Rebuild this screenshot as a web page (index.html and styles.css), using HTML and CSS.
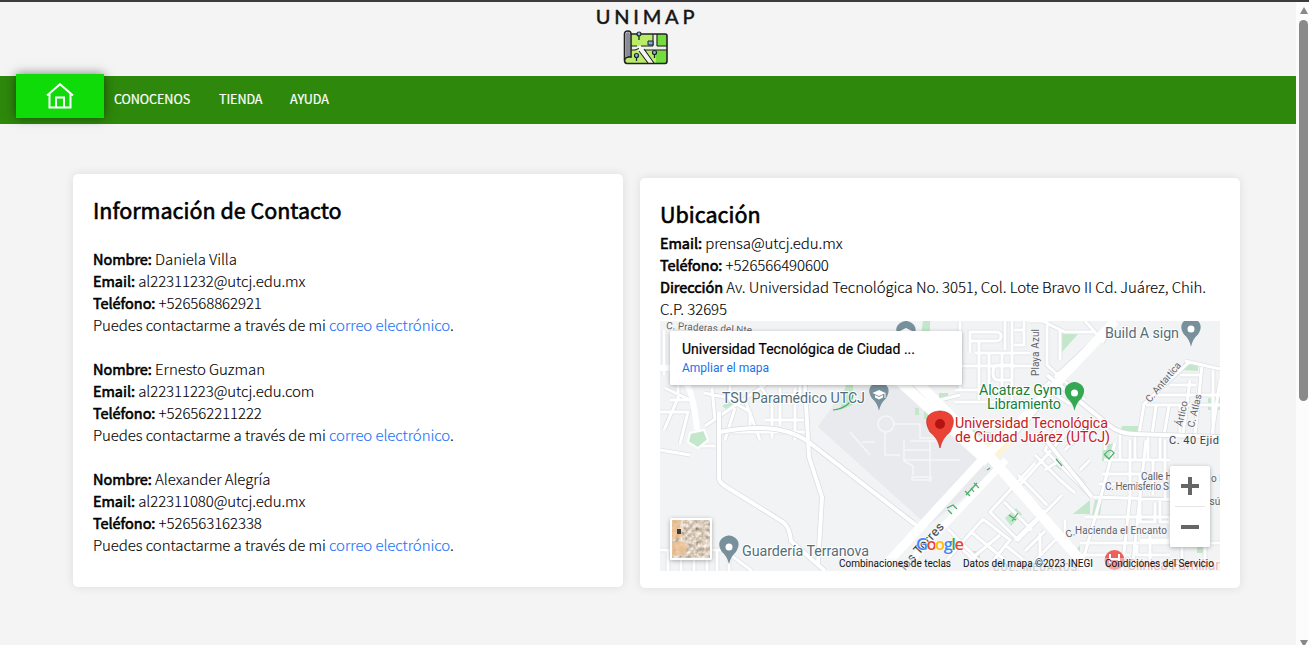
FILE: index.html
```html
<!DOCTYPE html>
<html lang="es">
<head>
<meta charset="utf-8">
<title>UNIMAP</title>
<link rel="stylesheet" href="styles.css">
</head>
<body>
<div class="window">
<div class="page">
  <header class="header">
    <div class="brand">UNIMAP</div>
    <svg class="logo" width="46" height="36" viewBox="0 0 46 36">
      <path d="M8 4H42.500Q44 4 44 6V31Q44 33.500 42 33.500H4Q1.500 33 1.500 29L8 27Z" fill="#b9ec67"/>
      <path d="M33 4H43Q44 4 44 6V31Q44 33 42 33.500H33Z" fill="#75dc3d"/>
      <path d="M8 18H44M32 4V18" stroke="#eee" stroke-width="3.500"/>
      <path d="M15 17L29 33" stroke="#f4f4f4" stroke-width="5"/>
      <path d="M8 16H14M8 20H12L16 18.500M18 16H30M34 16H44M30 4V16M34 4V16M21 20H44M16 21L25 33M21 19L31 33" stroke="#222" fill="none" stroke-width="1.100"/>
      <path d="M8 4H42.500Q44 4 44 6V31Q44 33.500 42 33.500H4Q1.500 33.500 1.500 30V4Q1.500 1 5 1Q8 1 8 4V27Q2 26 1.500 31" fill="none" stroke="#222" stroke-width="1.600"/>
      <path d="M2.400 4Q5 0 7 4V26H5Q3 26 2.400 28Z" fill="#8a8b98"/>
      <path d="M25 11H30V15H25Z" fill="#78a9e8" stroke="#222"/>
      <path d="M16 5V10M13.500 27V31M31.500 24V28" stroke="#222" stroke-width="1.300"/>
      <g fill="#86b6ef" stroke="#222" stroke-width="1.200"><circle cx="16" cy="4" r="2"/><circle cx="13.500" cy="25.500" r="2"/><circle cx="31.500" cy="22.500" r="2"/></g>
    </svg>
  </header>
  <nav class="nav">
    <a class="home"><svg width="28" height="26" viewBox="0 0 28 26" fill="none" stroke="#fff" stroke-width="2"><path d="M1 12.500L14 1.200L27 12.500M3.500 10.500V24.500H24.500V10.500M10 24V14.500H18V24"/></svg></a>
    <a class="n1">CONOCENOS</a><a class="n2">TIENDA</a><a class="n3">AYUDA</a>
  </nav>
  <main class="main">
    <section class="card contact">
      <h2>Información de Contacto</h2>
      <div class="person"><p><b>Nombre:</b> Daniela Villa</p><p><b>Email:</b> al22311232@utcj.edu.mx</p><p><b>Teléfono:</b> +526568862921</p><p>Puedes contactarme a través de mi <a>correo electrónico</a>.</p></div>
      <div class="person"><p><b>Nombre:</b> Ernesto Guzman</p><p><b>Email:</b> al22311223@utcj.edu.com</p><p><b>Teléfono:</b> +526562211222</p><p>Puedes contactarme a través de mi <a>correo electrónico</a>.</p></div>
      <div class="person"><p><b>Nombre:</b> Alexander Alegría</p><p><b>Email:</b> al22311080@utcj.edu.mx</p><p><b>Teléfono:</b> +526563162338</p><p>Puedes contactarme a través de mi <a>correo electrónico</a>.</p></div>
    </section>
    <section class="card place">
      <h2>Ubicación</h2>
      <p><b>Email:</b> prensa@utcj.edu.mx</p><p><b>Teléfono:</b> +526566490600</p><p><b>Dirección</b> Av. Universidad Tecnológica No. 3051, Col. Lote Bravo II Cd. Juárez, Chih.</p><p>C.P. 32695</p>
      <svg class="map" width="560" height="250" viewBox="660 321 560 250">
        <defs>
          <path id="minor" d="M660 369H700M678 382V398L664 430M664 330V375M670 400H690M660 412H688L680 444M690 400L665 388M705 426L772 380M704 393L740 400M712 388L715 420M730 385V400L750 412V425M760 385L772 405V438M745 400L760 440M718 432H805M700 446H715M735 408L725 440M780 388V425M795 388V440M765 420H805M660 450L690 455M800 385V395H780M660 550H724L752 571M668 551V571M681 551V571M694 551V571M707 551V571M717 551V571M729 560V571M970 341H996Q1001 341 1001 336Q1001 332 996 332H970V353M960 321V390M975 353H1030M979 342V400M989 353V400M1002 353V400M1012 321V400M1024 321V330H1014M1024 330V345H1014M1014 365H998Q993 365 993 373Q993 380 998 380H1012M955 366H1034M955 390H1005M955 402H1030M946 353V385M1005 321V350M940 400L960 395M1030 321H1042L1065 332H1095L1103 343M1047 321V365L1085 400M1060 330V360M1095 340L1045 386M1085 321L1103 341M1042 386L1070 404M1185 361L1220 369M1188 363L1144 404L1139 435M1180 375H1200M1170 385H1196M1158 395H1220M1146 405H1220M1156 406L1152 435M1169 406L1164 435M1180 406V435M1190 380L1183 435M1202 365L1195 435M1213 370V435M1220 380L1212 435M1105 435V450M1120 435V460M1135 435V460M1148 435V460M1160 435V460M1115 443L1100 500L1080 571M1130 440V497L1122 571M1146 440L1132 571M1104 460H1170M1102 474H1172M1099 484H1172M1092 497L1220 501M1085 517H1170V540H1140M1080 543H1220M1140 475V500M1153 460V495M1165 440V500M1140 498V522H1155V503M1160 500V522H1175M1075 555H1130M1137 545V555H1170M1150 530V571M1182 540V571M1205 545V571M1065 435L1018 487M1055 430L1045 450L1092 497M1065 450L1085 430M1080 470L1090 460M1060 480L1075 493M1075 475L1085 485M1035 455L1062 482M1018 475L1047 505M1035 463L990 512L1018 540L1062 495M1004 502L1032 530M1020 490L1045 514M983 519L944 563M983 519L1010 540L985 571M970 531L1005 560M958 545L985 571M948 529L984 566M1000 535L970 560M1005 545L1030 565M1015 540L1045 510M1025 551L1045 531M1035 561L1055 540M1045 470L1060 460M1040 533V555M1065 520V540H1055"/>
          <path id="roads" d="M719 412V478Q719 482 725 486L783 522Q790 528 791 541L825 571M805 385L809 457L822 497L818 565M720 432Q780 420 810 443L912 522Q917 525 921 530M1102 342L1115 321M1010 439L1115 321M1047 375L1110 426Q1120 434 1135 434L1220 437M1042 435L1092 497"/>
          <path id="pin" d="M0 17Q-2 8-8 3C-17-11-4-16 0-16S17-11 8 3Q2 8 0 17Z"/>
          <filter id="terrain" x="0" y="0" width="1" height="1"><feTurbulence type="fractalNoise" baseFrequency=".25" numOctaves="3" seed="5" result="n"/><feColorMatrix in="n" values=".9 .5 0 0 0  .9 .4 0 0 -.04  .9 .3 0 0 -.09  0 0 0 0 1"/></filter>
          <filter id="drop" x="-20%" y="-20%" width="140%" height="150%"><feDropShadow dx="0" dy="1" stdDeviation="2" flood-opacity=".3"/></filter>
        </defs>
        <path d="M660 321H1220V571H660Z" fill="#f1f3f4"/>
        <path d="M846 387H915L978 455L1000 468L928 526L818 427Z" fill="#e8eaed"/>
        <path d="M984 445L1005 425L1018 438L990 465Z" fill="#fef3d5"/>
        <g fill="#c3e7ca"><path d="M722 406L735 398L729 411ZM752 391L766 383L755 397ZM1062 334H1078L1062 352ZM1180 370L1185 361L1198 365V371ZM1208 398H1220V410H1208ZM1122 426H1141V433H1120ZM1103 445L1116 443L1113 461H1102ZM1090 500V514H1073ZM1095 500H1102L1100 515H1092ZM1071 556L1080 545V560ZM923 321H930V335H921ZM939 393H948V401H939ZM915 408H919V415H915ZM924 407H930V419H924ZM846 385H853V405L840 410ZM970 430L990 432L996 440L980 436ZM1005 518L1016 508L1022 514L1011 526ZM1142 519L1150 520V523H1142ZM1165 520H1173V523H1165ZM1197 547H1207V553H1197ZM973 551H980V558H973ZM1055 460L1066 467L1061 470L1053 464Z"/></g>
        <g fill="none" stroke="#f5f6f8" stroke-width="1.600"><circle cx="886" cy="424" r="8"/><path d="M893 424H920V438H940M904 440V461L913 466V475M904 460H960M912 477H931V480H912ZM930 440V482M885 433V455H900M910 441H938M905 450H930M850 432L870 455M862 442H875"/></g>
        <use href="#minor" fill="none" stroke="#dfe1e5" stroke-width="4.600"/><use href="#minor" fill="none" stroke="#fff" stroke-width="3"/>
        <use href="#roads" fill="none" stroke="#dadce2" stroke-width="5.500"/><use href="#roads" fill="none" stroke="#fff" stroke-width="4"/>
        <path d="M685 382Q693 390 697 430M660 368H672" stroke="#fff" stroke-width="6" fill="none"/>
        <path d="M888 371L988 462M915 380L984 450L1090 571" stroke="#fff" stroke-width="10" fill="none"/>
        <path d="M1115 321L1030 412L984 458L880 571" stroke="#fff" stroke-width="9" fill="none"/><path d="M1006 460L901 571" stroke="#fff" stroke-width="7"/>
        <path d="M833 410Q850 408 853 395M947 508L953 505L957 509M952 514L948 510M966 495L977 483M965 491L970 496M974 483L979 488M971 488L974 492M987 470L990 468M1056 459L1062 466M1105 454Q1110 447 1114 453L1109 459L1104 454M1009 515L1016 520M1012 521L1018 513" stroke="#4cad6c" stroke-width="1.200" fill="none"/>
        <path d="M690 433L704 430L708 440L698 448L688 442Z" fill="#c3e7ca" stroke="#fff" stroke-width="2"/>
        <g class="street">
          <text x="666" y="329" textLength="86" transform="rotate(3 666 329)">C. Praderas del Nte</text>
          <text transform="translate(1039 376) rotate(-90)" textLength="47">Playa Azul</text>
          <text transform="translate(1150 403) rotate(-50)" textLength="49">C. Antartica</text>
          <text transform="translate(1182 427) rotate(-77)" textLength="26">Ártico</text>
          <text transform="translate(1194 428) rotate(-77)" textLength="34">C. Atlas</text>
          <text x="1169" y="444" textLength="50" class="strong">C. 40 Ejid</text>
          <text x="1141" y="480">Calle H</text><text x="1105" y="490" textLength="64">C. Hemisferio S</text>
          <text x="1211" y="482">o N</text><text x="1209.500" y="505">sú</text>
          <text x="1075" y="534" textLength="92">Hacienda el Encanto</text><text transform="translate(1067 538) rotate(-20)">C.</text>
          <text transform="translate(905 571) rotate(-48)" textLength="59" class="avenue">las Torres</text>
          <text x="993" y="571" fill="#aaa" textLength="84">COL. MEDANOS</text>
        </g>
        <g fill="#78909c"><use href="#pin" transform="translate(906 335) scale(.87)"/><use href="#pin" transform="translate(879 396) scale(.87)"/><use href="#pin" transform="translate(1191 332) scale(.87)"/><use href="#pin" transform="translate(729 549.500) scale(.87)"/></g>
        <g fill="#fff"><circle cx="1191" cy="329" r="3.500"/><circle cx="729" cy="547" r="3.500"/><path d="M872.500 393L879 390L885.500 393L879 396ZM875 395L879 397L883 395V397.500L879 399.500L875 397.500ZM884.500 393H885.500V398H884.500ZM898 332L906 328L914 332Z"/></g>
        <use href="#pin" transform="translate(1074.500 396) scale(.87)" fill="#34a853"/><circle cx="1074.500" cy="393" r="3.500" fill="#fff"/>
        <path d="M940 448Q938 438 930 432C920 414 935 411 940 411S960 414 950 432Q942 438 940 448Z" fill="#ea4335" stroke="#c5221f" stroke-width=".6"/><circle cx="940" cy="424" r="5" fill="#b31412"/>
        <circle cx="1114.500" cy="560" r="10" fill="#ed615b"/><path d="M1110 554V563M1119 554V563M1110 559H1119" stroke="#fff" stroke-width="2"/>
        <g class="poi">
          <text x="722" y="403" textLength="143">TSU Paramédico UTCJ</text><text x="1105" y="338" textLength="74">Build A sign</text><text x="742" y="556" textLength="127">Guardería Terranova</text>
          <text x="979" y="395" textLength="83" class="green">Alcatraz Gym</text><text x="987" y="409" textLength="74" class="green">Libramiento</text>
          <text x="955" y="428" textLength="153" class="red">Universidad Tecnológica</text><text x="955" y="442" textLength="155" class="red">de Ciudad Juárez (UTCJ)</text>
          <text x="1127" y="570" textLength="93" class="clinic">Clínica Familiar</text>
        </g>
        <path d="M835 558H1220V571H835Z" fill="#f5f5f5" fill-opacity=".45"/>
        <g class="legal"><text x="839" y="567" textLength="112">Combinaciones de teclas</text><text x="963" y="567" textLength="130">Datos del mapa ©2023 INEGI</text><text x="1105" y="567" textLength="109">Condiciones del Servicio</text></g>
        <text x="916" y="550" class="google" textLength="48"><tspan fill="#4285f4">G</tspan><tspan fill="#ea4335">o</tspan><tspan fill="#fbbc04">o</tspan><tspan fill="#4285f4">g</tspan><tspan fill="#34a853">l</tspan><tspan fill="#ea4335">e</tspan></text>
        <rect x="670" y="331" width="292" height="54" rx="2" fill="#fff" filter="url(#drop)"/>
        <text x="682" y="354" class="title" textLength="233">Universidad Tecnológica de Ciudad ...</text><text x="682" y="372" class="expand" textLength="87">Ampliar el mapa</text>
        <rect x="670" y="518" width="42" height="42" rx="2" fill="#fff" filter="url(#drop)"/><rect x="672" y="520" width="38" height="38" filter="url(#terrain)"/>
        <path d="M672 520H681L679 531L684 536L672 540ZM672 543L681 541L688 547L684 554L672 555Z" fill="#efbf8f" opacity=".75"/><path d="M677 529H681V534H677Z" fill="#403a36"/>
        <rect x="1170" y="466" width="40" height="81" rx="2" fill="#fff" filter="url(#drop)"/><path d="M1175 506.500H1205" stroke="#e6e6e6"/><path d="M1181 486H1199M1190 477V495M1181 527H1199" stroke="#666" stroke-width="4"/>
      </svg>
    </section>
  </main>
</div>
<aside class="scrollbar"><i class="up"></i><i class="thumb"></i><i class="down"></i></aside>
</div>
</body>
</html>
```
FILE: styles.css
```css
* { box-sizing: border-box; }
body { margin: 0; background: #f4f4f4; color: #000; font: 300 15px/22px "Noto Sans CJK SC", "Noto Sans", sans-serif; letter-spacing: -.085px; overflow: hidden; }
.window { display: flex; height: 645px; border-top: 2px solid #3d3b3d; }
.page { flex: 1; min-width: 0; }
.header { height: 74px; display: flex; flex-direction: column; align-items: center; padding-top: 4px; }
.brand { font: 20px/20px Lato, sans-serif; letter-spacing: 3.8px; color: #151515; -webkit-text-stroke: .5px #151515; padding-right: 2px; }
.logo { margin-top: 4px; margin-right: 5px; }
.nav { height: 48px; background: #2d880b; display: flex; align-items: center; color: #fff; font-size: 12.6px; font-weight: 400; padding-left: 16px; white-space: nowrap; }
.home { width: 88px; height: 44px; margin-top: -8px; margin-right: 10px; background: #0fdb08; display: flex; align-items: center; justify-content: center; box-shadow: 0 0 10px rgba(0,0,0,.5); }
.nav a:not(.home) { padding-bottom: 2px; -webkit-text-stroke: .2px #fff; }
.n1 { width: 105px; } .n2 { width: 71px; }
.main { display: grid; grid-template-columns: 550px 600px; gap: 17px; padding: 50px 0 0 73px; align-items: start; }
.card { background: #fff; border-radius: 5px; padding: 19px 20px; box-shadow: 0 0 10px rgba(0,0,0,.1); }
.contact { height: 413px; }
.place { height: 410px; margin-top: 4px; }
h2 { margin: 0 0 1px; font-size: 21.5px; line-height: 34px; letter-spacing: 0; font-weight: 400; -webkit-text-stroke: .6px #000; white-space: nowrap; }
p { margin: 0; height: 22px; white-space: nowrap; -webkit-text-stroke: .12px; }
b { font-weight: 400; font-size: 14.5px; letter-spacing: -.05px; -webkit-text-stroke: .6px #000; }
.contact h2 { margin-bottom: 21px; }
.person { margin-bottom: 22px; }
.person a { color: #1a73f8; }
.map { display: block; margin-top: 1px; font-family: Roboto, sans-serif; font-weight: 400; letter-spacing: 0; }
.street { font-size: 10px; fill: #5f6368; stroke: #f5f6f8; stroke-width: 2px; paint-order: stroke; }
.strong { font-size: 11px; fill: #3c4043; }
.avenue { font-size: 12.5px; fill: #3c4043; }
.poi { font-size: 14.3px; fill: #546e7a; stroke: #fff; stroke-width: 2px; paint-order: stroke; }
.green { fill: #188038; }
.red { fill: #c5221f; }
.clinic { fill: #e98c88; }
.legal { font-size: 10px; fill: #111; }
.google { font: 600 16.5px "Open Sans", sans-serif; stroke: #fff; stroke-width: 1px; paint-order: stroke; }
.title { font-size: 14px; fill: #000; stroke: #000; stroke-width: .2px; }
.expand { font-size: 12px; fill: #1a73e8; }
.scrollbar { width: 13px; background: #fcfcfc; display: flex; flex-direction: column; align-items: center; padding: 5px 0 0 2px; }
.up, .down { width: 0; height: 0; border: 4.5px solid transparent; }
.up { border-top: 0; border-bottom: 7px solid #888; }
.down { border-bottom: 0; border-top: 7px solid #888; margin-top: auto; margin-bottom: -2px; }
.thumb { width: 9px; height: 381px; margin-top: 6px; border-radius: 5px; background: #8a8a8a; }
```
